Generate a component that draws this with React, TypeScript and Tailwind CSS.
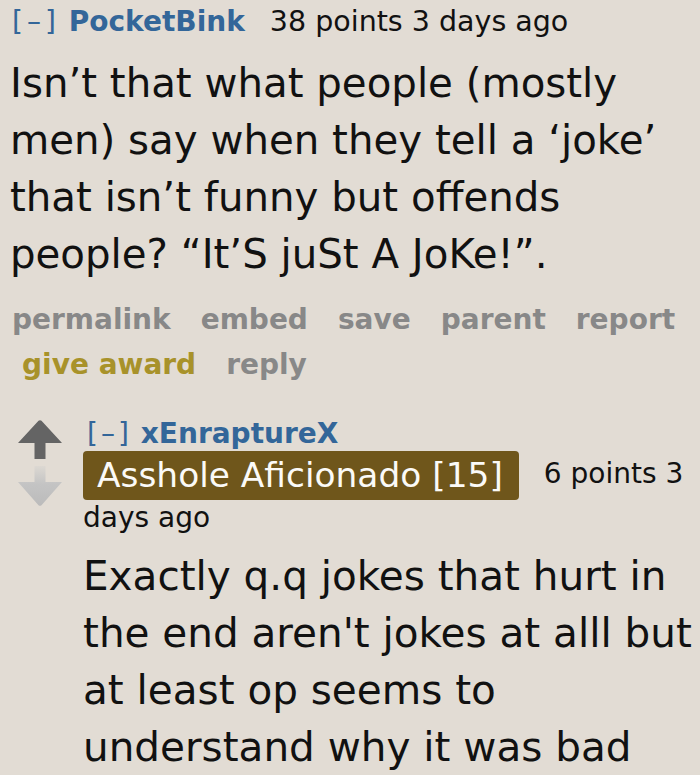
import { ReactNode } from 'react'

const font = "font-['DejaVu_Sans',Verdana,sans-serif]"

function ActionLink({ children, gold }: { children: ReactNode; gold?: boolean }) {
  return (
    <span className={gold ? 'font-bold text-[#a8922a]' : 'font-bold text-[#888888]'}>
      {children}
    </span>
  )
}

function Arrows() {
  return (
    <div className="flex flex-col items-center gap-[7px] w-[44px] pt-[4px] flex-shrink-0">
      <svg width="44" height="39" viewBox="0 0 44 39">
        <path d="M20.5 0.8 Q22 -0.4 23.5 0.8 L44 23 L27.5 23 L27.5 39 L16.5 39 L16.5 23 L0 23 Z" fill="#646464" />
      </svg>
      <svg width="44" height="40" viewBox="0 0 44 40">
        <defs>
          <linearGradient id="dn" x1="0" y1="0" x2="0" y2="1">
            <stop offset="0" stopColor="#dcd8d2" />
            <stop offset="0.45" stopColor="#c4c4c4" />
            <stop offset="1" stopColor="#bbbbbb" />
          </linearGradient>
        </defs>
        <path d="M16.5 0 L27.5 0 L27.5 16 L44 16 L23.5 39.2 Q22 40.4 20.5 39.2 L0 16 L16.5 16 Z" fill="url(#dn)" />
      </svg>
    </div>
  )
}

export default function App() {
  return (
    <div className={`${font} w-[700px] h-[775px] overflow-hidden bg-[#e2dcd4] text-[#111111]`}>
      {/* parent comment */}
      <div className="pl-[10px] pt-[4px]">
        <div className="text-[28px] leading-[36px] whitespace-nowrap pl-[2px]">
          <span className="text-[#336699] tracking-[4px]">[–]</span>{' '}
          <span className="font-bold text-[#336699]">PocketBink</span>
          <span className="ml-[25px] text-[28.5px]">38 points 3 days ago</span>
        </div>
        <p className="mt-[15px] text-[40.3px] leading-[57px] pr-[8px]">
          Isn’t that what people (mostly men) say when they tell a ‘joke’ that isn’t funny but
          offends people? “It’S juSt A JoKe!”.
        </p>
        <div className="mt-[14px] text-[28px] leading-[45px] flex flex-wrap gap-x-[30px] pl-[2px]">
          <ActionLink>permalink</ActionLink>
          <ActionLink>embed</ActionLink>
          <ActionLink>save</ActionLink>
          <ActionLink>parent</ActionLink>
          <ActionLink>report</ActionLink>
          <span className="pl-[10px]">
            <ActionLink gold>give award</ActionLink>
          </span>
          <ActionLink>reply</ActionLink>
        </div>
      </div>

      {/* child comment */}
      <div className="flex mt-[29px] pl-[18px]">
        <Arrows />
        <div className="ml-[21px] flex-1">
          <div className="text-[28px] leading-[36px] pl-[4px]">
            <span className="text-[#336699] tracking-[3px]">[–]</span>{' '}
            <span className="font-bold text-[#336699]">xEnraptureX</span>
          </div>
          <div className="text-[28px] leading-[44px] pr-[8px]">
            <span className="inline-block align-[-4px] bg-[#6f561b] text-[#fbfaf7] text-[34.4px] leading-[41px] rounded-[4px] pl-[14px] pr-[16px] py-[4px] -my-[4px] mr-[25px]">
              Asshole Aficionado [15]
            </span>
            6 points 3 days ago
          </div>
          <p className="mt-[8px] text-[40.5px] leading-[57px]">
            Exactly q.q jokes that hurt in the end aren't jokes at alll but at least op seems to
            understand why it was bad
          </p>
        </div>
      </div>
    </div>
  )
}
